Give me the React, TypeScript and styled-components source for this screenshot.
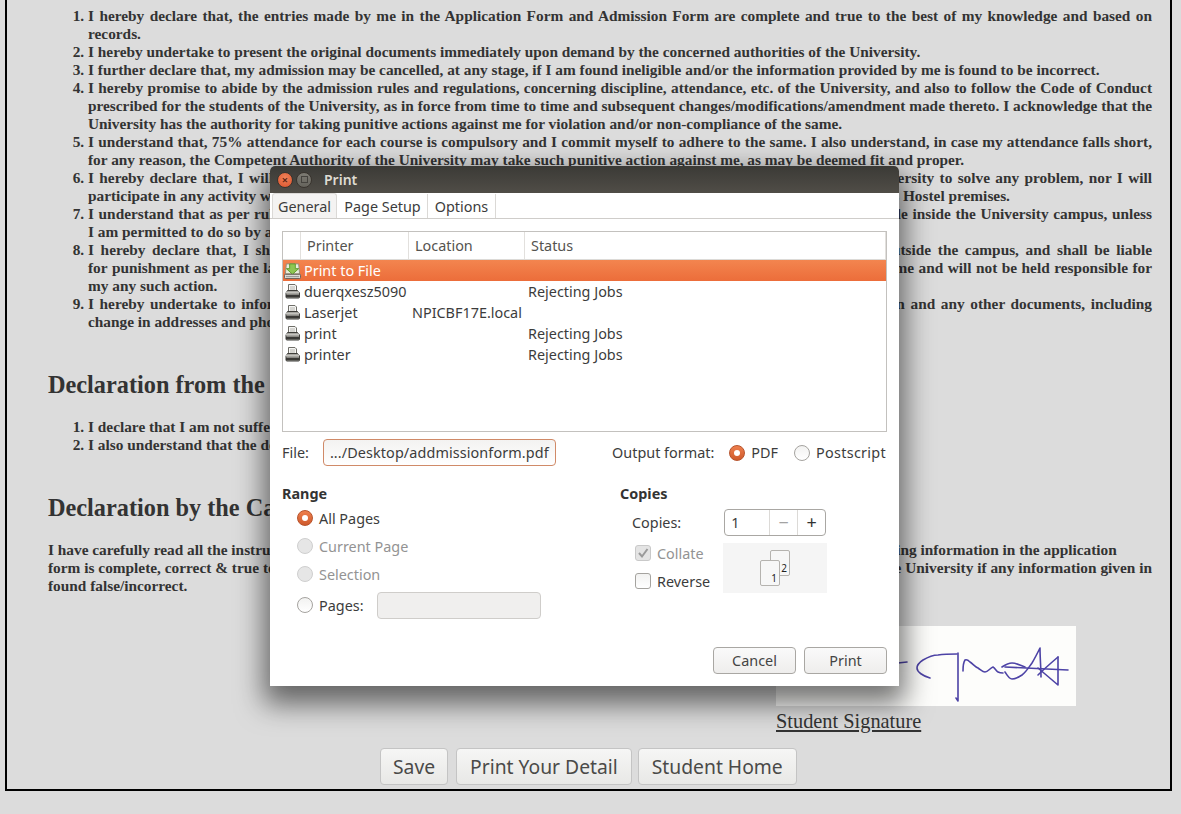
import React from "react";
import styled, { createGlobalStyle } from "styled-components";

const GlobalStyle = createGlobalStyle`
  html, body {
    margin: 0;
    padding: 0;
    background: #dcdcdc;
  }
`;

const uiFont = `"Noto Sans", "Open Sans", sans-serif`;

const declarations = [
  "I hereby declare that, the entries made by me in the Application Form and Admission Form are complete and true to the best of my knowledge and based on records.",
  "I hereby undertake to present the original documents immediately upon demand by the concerned authorities of the University.",
  "I further declare that, my admission may be cancelled, at any stage, if I am found ineligible and/or the information provided by me is found to be incorrect.",
  "I hereby promise to abide by the admission rules and regulations, concerning discipline, attendance, etc. of the University, and also to follow the Code of Conduct prescribed for the students of the University, as in force from time to time and subsequent changes/modifications/amendment made thereto. I acknowledge that the University has the authority for taking punitive actions against me for violation and/or non-compliance of the same.",
  "I understand that, 75% attendance for each course is compulsory and I commit myself to adhere to the same. I also understand, in case my attendance falls short, for any reason, the Competent Authority of the University may take such punitive action against me, as may be deemed fit and proper.",
  "I hereby declare that, I will not approach any outside agency, media or any court of law of the country against the University to solve any problem, nor I will participate in any activity which is against the rules of the University, whether within or at the campus or the Boys and Girls Hostel premises.",
  "I understand that as per rules of the University, I am not allowed to bring, keep or drive any kind of motor or other vehicle inside the University campus, unless I\u00a0am permitted to do so by an appropriate authority of the University.",
  "I hereby declare that, I shall not indulge in any kind of ragging, eve-teasing or in any misconduct either inside or outside the campus, and shall be liable for\u00a0punishment as per the law of the land. I will be solely responsible for any loss of all my property or of my life in the same and will not be held responsible for my\u00a0any\u00a0such\u00a0action.",
  "I hereby undertake to inform the University authorities immediately of any change in the details given in the application and any other documents, including change in addresses and phone numbers.",
];

const disabilityItems = [
  "I declare that I am not suffering from any serious or contagious disease.",
  "I also understand that the decision of the University in this regard shall be final.",
];

const printers = [
  { name: "Print to File", location: "", status: "", file: true },
  { name: "duerqxesz5090", location: "", status: "Rejecting Jobs" },
  { name: "Laserjet", location: "NPICBF17E.local", status: "" },
  { name: "print", location: "", status: "Rejecting Jobs" },
  { name: "printer", location: "", status: "Rejecting Jobs" },
];

const Page = styled.div`
  position: relative;
  height: 814px;
  overflow: hidden;
  background: #dcdcdc;
`;

const Frame = styled.main`
  box-sizing: border-box;
  width: 1167px;
  height: 791px;
  margin-left: 5px;
  padding: 7px 18px 0 41px;
  border: 2px solid #000;
  border-top: none;
  color: #333;
  font-family: "Liberation Serif", "Times New Roman", serif;
`;

const List = styled.ol<{ $gap: number }>`
  margin: 0 0 ${(p) => p.$gap}px;
  padding-left: 40px;
  font-size: 15.33px;
  font-weight: 700;
  line-height: 18px;
  text-align: justify;
`;

const Heading = styled.h2`
  margin: 0 0 19px;
  font-size: 24.3px;
  line-height: 28px;
  font-weight: 700;
`;

const Statement = styled.p`
  margin: 0 0 31px;
  font-size: 15.33px;
  font-weight: 700;
  line-height: 18px;
  text-align: justify;
`;

const SignatureBlock = styled.div`
  margin-left: 728px;
  width: 300px;
`;

const SignatureCard = styled.div`
  height: 80px;
  background: #fdfdfb;

  svg {
    display: block;
  }
`;

const SignatureLabel = styled.div`
  margin-top: 4px;
  font-size: 20.35px;
  line-height: 23px;
  text-decoration: underline;
`;

const PageActions = styled.div`
  display: flex;
  justify-content: flex-start;
  gap: 6px;
  margin: 15px 0 0 332px;
`;

const PageButton = styled.button`
  box-sizing: border-box;
  height: 37px;
  padding: 0 13px;
  border: 1px solid #c4c4c4;
  border-radius: 4px;
  background: linear-gradient(#f6f6f5, #e8e8e6);
  color: #4a4a48;
  font-family: ${uiFont};
  font-size: 19.3px;
  white-space: nowrap;
`;

const SaveButton = styled(PageButton)`
  margin-right: 2px;
  padding: 0 12px;
`;

const Dialog = styled.section`
  position: absolute;
  left: 270px;
  top: 166px;
  width: 629px;
  height: 520px;
  display: flex;
  flex-direction: column;
  background: #fff;
  color: #3c3c3c;
  font-family: ${uiFont};
  font-size: 14.4px;
  box-shadow: 0 12px 28px 6px rgba(0, 0, 0, 0.55);
  border-radius: 5px 5px 0 0;
`;

const TitleBar = styled.header`
  display: flex;
  align-items: center;
  flex: 0 0 27px;
  padding-left: 7px;
  background: linear-gradient(#3b3a36, #504d47);
  border-radius: 5px 5px 0 0;
  color: #dfdbd2;
  font-weight: 600;
  font-size: 14px;
`;

const CloseDot = styled.span`
  box-sizing: border-box;
  display: flex;
  align-items: center;
  justify-content: center;
  width: 16px;
  height: 16px;
  border-radius: 50%;
  background: radial-gradient(circle at 50% 35%, #f0835a, #d9512b);
  border: 1px solid #39342e;
  color: #5a2413;
  font-size: 11px;
  line-height: 1;
`;

const MaxDot = styled.span`
  box-sizing: border-box;
  display: flex;
  align-items: center;
  justify-content: center;
  width: 16px;
  height: 16px;
  margin-left: 3px;
  border-radius: 50%;
  background: linear-gradient(#7d7b73, #65635c);
  border: 1px solid #39342e;

  &::after {
    content: "";
    width: 5px;
    height: 5px;
    border: 1px solid #45433e;
  }
`;

const TitleText = styled.span`
  margin-left: 12px;
`;

const TabRow = styled.nav`
  display: flex;
  flex: 0 0 25px;
  box-sizing: border-box;
  padding-left: 2px;
  border-bottom: 1px solid #cfcdca;
`;

const Tab = styled.div<{ $active?: boolean; $width: number }>`
  box-sizing: border-box;
  width: ${(p) => p.$width}px;
  margin-right: ${(p) => (p.$active ? 1 : 0)}px;
  height: ${(p) => (p.$active ? 25 : 24)}px;
  margin-top: ${(p) => (p.$active ? 0 : 1)}px;
  border-right: 1px solid #dbd9d6;
  border-top: ${(p) => (p.$active ? "1px solid #dbd9d6" : "none")};
  border-left: ${(p) => (p.$active ? "1px solid #dbd9d6" : "none")};
  border-radius: ${(p) => (p.$active ? "3px 3px 0 0" : "0")};
  background: ${(p) => (p.$active ? "#f4f3f2" : "#fff")};
  text-align: center;
  line-height: 25px;
  white-space: nowrap;
`;

const DialogBody = styled.div`
  display: flex;
  flex-direction: column;
  flex: 1;
  padding: 12px 12px 12px;
`;

const PrinterTree = styled.div`
  box-sizing: border-box;
  height: 201px;
  border: 1px solid #c3c1be;
`;

const TreeRow = styled.div`
  display: grid;
  grid-template-columns: 18px 108px 116px 1fr;
  height: 21px;
  line-height: 21px;
  white-space: nowrap;
`;

const TreeHeader = styled(TreeRow)`
  height: 27px;
  line-height: 27px;
  border-bottom: 1px solid #dcdad7;
  color: #55534f;
`;

const HeaderCell = styled.div`
  padding-left: 6px;
  border-right: 1px solid #e2e0dd;
`;

const PrinterRow = styled(TreeRow)<{ $selected?: boolean }>`
  background: ${(p) =>
    p.$selected ? "linear-gradient(#f3854f, #ec6d3a)" : "transparent"};
  color: ${(p) => (p.$selected ? "#fff" : "#3c3c3c")};
`;

const IconCell = styled.div`
  display: flex;
  align-items: center;
  justify-content: center;
  padding-left: 1px;
`;

const NameCell = styled.div`
  padding-left: 3px;
`;

const OutputRow = styled.div`
  display: flex;
  align-items: center;
  height: 27px;
  margin-top: 7px;
`;

const Label = styled.span`
  white-space: nowrap;
`;

const FileField = styled.div`
  box-sizing: border-box;
  width: 233px;
  height: 27px;
  margin-left: 14px;
  padding-left: 6px;
  border: 1px solid #d08a68;
  border-radius: 4px;
  background: linear-gradient(#f3f2f1, #fff);
  line-height: 25px;
  letter-spacing: 0.1px;
  white-space: nowrap;
  overflow: hidden;
`;

const FormatGroup = styled.div`
  display: flex;
  align-items: center;
  margin-left: auto;
  padding-right: 1px;
`;

const FormatLabel = styled(Label)`
  margin-right: 15px;
`;

const Radio = styled.span<{ $checked?: boolean; $disabled?: boolean }>`
  box-sizing: border-box;
  flex: 0 0 16px;
  display: inline-flex;
  align-items: center;
  justify-content: center;
  width: 16px;
  height: 16px;
  border-radius: 50%;
  border: 1px solid
    ${(p) => (p.$checked ? "#b7532c" : p.$disabled ? "#cfcfcf" : "#a5a39f")};
  background: ${(p) =>
    p.$checked
      ? "linear-gradient(#ee7f4d, #cf5a2c)"
      : p.$disabled
        ? "#e6e6e6"
        : "linear-gradient(#f2f2f1, #fff)"};

  &::after {
    content: "";
    display: ${(p) => (p.$checked ? "block" : "none")};
    width: 6px;
    height: 6px;
    border-radius: 50%;
    background: #fff;
  }
`;

const OptionLabel = styled.span<{ $disabled?: boolean; $offset?: number; $spread?: number }>`
  margin: 0 ${(p) => p.$offset ?? 0}px 0 6px;
  color: ${(p) => (p.$disabled ? "#939393" : "#3c3c3c")};
  letter-spacing: ${(p) => p.$spread ?? 0}px;
  white-space: nowrap;
`;

const SettingsGrid = styled.div`
  display: grid;
  grid-template-columns: 338px 1fr;
  margin-top: 18px;
`;

const GroupTitle = styled.div`
  font-weight: 700;
  line-height: 20px;
  color: #333;
`;

const RangeOptions = styled.div`
  display: grid;
  grid-auto-rows: 28px;
  margin: 0 0 0 15px;
`;

const Option = styled.div`
  display: flex;
  align-items: center;
`;

const PagesInput = styled.div`
  box-sizing: border-box;
  width: 164px;
  height: 27px;
  margin-left: 13px;
  border: 1px solid #cfcdca;
  border-radius: 4px;
  background: #f0efee;
`;

const PagesOption = styled(Option)`
  margin-top: 6px;
`;

const CopiesRow = styled.div`
  display: flex;
  align-items: center;
  margin: 5px 0 0 12px;
`;

const Spinner = styled.div`
  box-sizing: border-box;
  display: grid;
  grid-template-columns: 44px 28px 1fr;
  width: 102px;
  height: 27px;
  margin-left: 43px;
  border: 1px solid #a9a7a3;
  border-radius: 4px;
  line-height: 25px;
`;

const SpinnerValue = styled.span`
  padding-left: 6px;
`;

const SpinnerStep = styled.span<{ $muted?: boolean }>`
  border-left: 1px solid #dcdad7;
  text-align: center;
  color: ${(p) => (p.$muted ? "#a3a3a3" : "#333")};
  font-size: 18px;
  line-height: 24px;
`;

const CollateRow = styled.div`
  display: flex;
  margin: 7px 0 0 15px;
`;

const CheckColumn = styled.div`
  display: grid;
  grid-auto-rows: 28px;
  width: 88px;
  margin-top: -4px;
`;

const CheckBox = styled.span<{ $disabled?: boolean }>`
  box-sizing: border-box;
  flex: 0 0 16px;
  display: inline-flex;
  align-items: center;
  justify-content: center;
  width: 16px;
  height: 16px;
  border: 1px solid ${(p) => (p.$disabled ? "#c9c9c9" : "#a5a39f")};
  border-radius: 3px;
  background: ${(p) =>
    p.$disabled ? "#e4e4e4" : "linear-gradient(#f2f2f1, #fff)"};

  svg {
    display: block;
  }
`;

const CollatePreview = styled.div`
  position: relative;
  width: 104px;
  height: 50px;
  background: #f5f5f5;
`;

const Sheet = styled.span<{ $left: number; $top: number }>`
  position: absolute;
  left: ${(p) => p.$left}px;
  top: ${(p) => p.$top}px;
  box-sizing: border-box;
  width: 20px;
  height: 26px;
  padding: 0 2px 1px 0;
  display: flex;
  align-items: flex-end;
  justify-content: flex-end;
  border: 1px solid #b5b3af;
  border-radius: 2px;
  background: #f7f7f7;
  color: #222;
  font-size: 10px;
  line-height: 12px;
`;

const DialogActions = styled.div`
  display: flex;
  justify-content: flex-end;
  gap: 8px;
  margin-top: auto;
`;

const DialogButton = styled.button`
  box-sizing: border-box;
  width: 83px;
  height: 27px;
  padding: 0;
  border: 1px solid #a9a7a3;
  border-radius: 4px;
  background: linear-gradient(#fafafa, #eeedec);
  color: #444;
  font-family: ${uiFont};
  font-size: 14.4px;
`;

const PrinterIcon = () => (
  <svg width="17" height="17" viewBox="0 0 17 17">
    <path d="M4.500 1.500h6.500l1.500 1.500v5h-8z" fill="#f6f6f4" stroke="#6f6e68" />
    <path d="M6 4h5M6 6h5" stroke="#b5b4ae" />
    <path d="M3.500 7.500h10l2 2.500v4a1 1 0 0 1-1 1h-11.500a1 1 0 0 1-1-1v-4z" fill="#8a8984" stroke="#3f3e3a" />
    <rect x="2" y="8.500" width="13" height="2" fill="#c4c3be" />
    <rect x="2" y="12" width="13" height="2" fill="#3a3936" />
  </svg>
);

const SaveToFileIcon = () => (
  <svg width="18" height="18" viewBox="0 0 18 18">
    <path d="M2.500 1.500h13l1 10.500h-15z" fill="#e9efdd" stroke="#8f9284" />
    <path d="M6 1.500h6v5h3.500L9 12.500 2.500 6.500H6z" fill="#8ec653" stroke="#5f9a2c" />
    <rect x="0.500" y="12.500" width="17" height="4.500" rx="1" fill="#dcdcd8" stroke="#5f5e58" />
    <rect x="2" y="14.500" width="14" height="1" fill="#8f8e88" />
  </svg>
);

const CheckMark = () => (
  <svg width="12" height="12" viewBox="0 0 12 12">
    <path d="M2 6l3 3.500L10.500 2" fill="none" stroke="#9a9a9a" strokeWidth="2" />
  </svg>
);

const SignatureDrawing = () => (
  <svg width="300" height="80" viewBox="0 0 300 80">
    <g fill="none" stroke="#4d43a6" strokeWidth="1.600" strokeLinecap="round" strokeLinejoin="round">
      <path d="M122 37l9-1" />
      <path d="M154 52c-7-2-13-6-13-10 0-4 3-6 6-8 5-3 10-5 15-5 7-1 13-1 19-1" />
      <path d="M182 27c0 16 0 32 0 48l-2-3" />
      <path d="M187 45c0-4 0-8 2-11 2-1 4 1 5 2 3 2 5 5 8 6 3 2 5 4 7 4 3 0 5-4 8-5 2 1 3 4 5 5 2 1 4 1 5 1" />
      <path d="M226 41c3-2 7-4 10-4 5 0 9 3 13 4" />
      <path d="M229 46c2 3 4 7 7 7 4 0 7-2 10-4 4-3 7-8 10-12 3-5 6-11 8-15 0 10 1 20 1 29" />
      <path d="M282 31c0 9 0 19 0 28l-20-17" />
      <path d="M282 31c-7 6-14 12-20 18" />
      <path d="M229 41c20 1 42 2 63 3" />
    </g>
  </svg>
);

export default function App() {
  return (
    <Page>
      <GlobalStyle />
      <Frame>
        <List $gap={40}>
          {declarations.map((text) => (
            <li key={text}>{text}</li>
          ))}
        </List>
        <Heading>Declaration from the Candidate</Heading>
        <List $gap={40}>
          {disabilityItems.map((text) => (
            <li key={text}>{text}</li>
          ))}
        </List>
        <Heading>Declaration by the Candidate</Heading>
        <Statement>
          I have carefully read all the instructions, the admission prospectus and rules of the University and I
          hereby declare that the foregoing information in the application
          <br />
          form is complete, correct &amp; true to the best of my knowledge and belief and I do accept that my
          admission may be cancelled by the University if any information given in found false/incorrect.
        </Statement>
        <SignatureBlock>
          <SignatureCard>
            <SignatureDrawing />
          </SignatureCard>
          <SignatureLabel>Student Signature</SignatureLabel>
        </SignatureBlock>
        <PageActions>
          <SaveButton>Save</SaveButton>
          <PageButton>Print Your Detail</PageButton>
          <PageButton>Student Home</PageButton>
        </PageActions>
      </Frame>

      <Dialog>
        <TitleBar>
          <CloseDot>×</CloseDot>
          <MaxDot />
          <TitleText>Print</TitleText>
        </TitleBar>
        <TabRow>
          <Tab $active $width={65}>General</Tab>
          <Tab $width={90}>Page Setup</Tab>
          <Tab $width={68}>Options</Tab>
        </TabRow>
        <DialogBody>
          <PrinterTree>
            <TreeHeader>
              <HeaderCell />
              <HeaderCell>Printer</HeaderCell>
              <HeaderCell>Location</HeaderCell>
              <HeaderCell>Status</HeaderCell>
            </TreeHeader>
            {printers.map((printer) => (
              <PrinterRow key={printer.name} $selected={printer.file}>
                <IconCell>{printer.file ? <SaveToFileIcon /> : <PrinterIcon />}</IconCell>
                <NameCell>{printer.name}</NameCell>
                <NameCell>{printer.location}</NameCell>
                <NameCell>{printer.status}</NameCell>
              </PrinterRow>
            ))}
          </PrinterTree>

          <OutputRow>
            <Label>File:</Label>
            <FileField>.../Desktop/addmissionform.pdf</FileField>
            <FormatGroup>
              <FormatLabel>Output format:</FormatLabel>
              <Radio $checked />
              <OptionLabel $offset={16}>PDF</OptionLabel>
              <Radio />
              <OptionLabel $spread={0.3}>Postscript</OptionLabel>
            </FormatGroup>
          </OutputRow>

          <SettingsGrid>
            <div>
              <GroupTitle>Range</GroupTitle>
              <RangeOptions>
                <Option>
                  <Radio $checked />
                  <OptionLabel>All Pages</OptionLabel>
                </Option>
                <Option>
                  <Radio $disabled />
                  <OptionLabel $disabled>Current Page</OptionLabel>
                </Option>
                <Option>
                  <Radio $disabled />
                  <OptionLabel $disabled>Selection</OptionLabel>
                </Option>
                <PagesOption>
                  <Radio />
                  <OptionLabel>Pages:</OptionLabel>
                  <PagesInput />
                </PagesOption>
              </RangeOptions>
            </div>
            <div>
              <GroupTitle>Copies</GroupTitle>
              <CopiesRow>
                <Label>Copies:</Label>
                <Spinner>
                  <SpinnerValue>1</SpinnerValue>
                  <SpinnerStep $muted>−</SpinnerStep>
                  <SpinnerStep>+</SpinnerStep>
                </Spinner>
              </CopiesRow>
              <CollateRow>
                <CheckColumn>
                  <Option>
                    <CheckBox $disabled>
                      <CheckMark />
                    </CheckBox>
                    <OptionLabel $disabled>Collate</OptionLabel>
                  </Option>
                  <Option>
                    <CheckBox />
                    <OptionLabel>Reverse</OptionLabel>
                  </Option>
                </CheckColumn>
                <CollatePreview>
                  <Sheet $left={47} $top={7}>2</Sheet>
                  <Sheet $left={37} $top={17}>1</Sheet>
                </CollatePreview>
              </CollateRow>
            </div>
          </SettingsGrid>

          <DialogActions>
            <DialogButton>Cancel</DialogButton>
            <DialogButton>Print</DialogButton>
          </DialogActions>
        </DialogBody>
      </Dialog>
    </Page>
  );
}
